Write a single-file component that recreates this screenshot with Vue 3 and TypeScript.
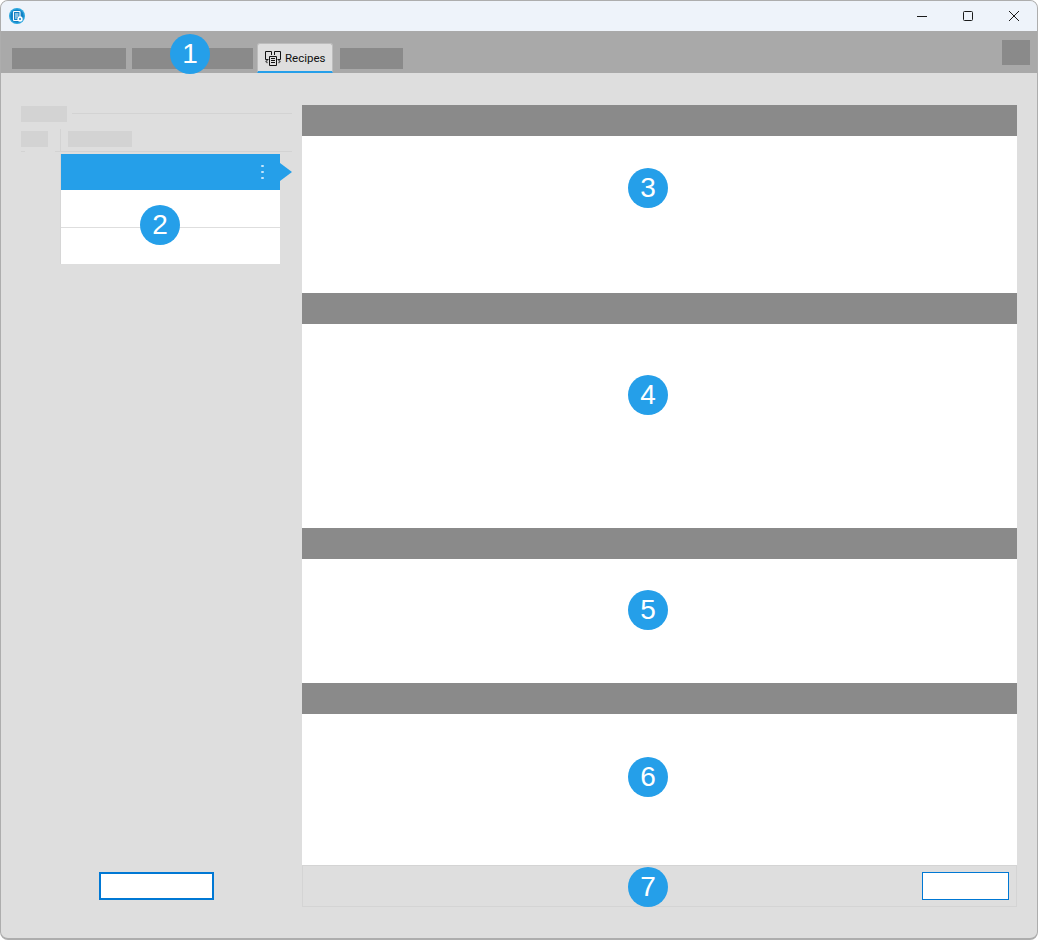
<template>
  <div class="window">
    <header class="titlebar">
      <svg class="app-icon" viewBox="0 0 16 16" width="16" height="16">
        <circle cx="8" cy="8" r="8" fill="#2aa6de" />
        <circle cx="8" cy="8" r="6.6" fill="#1280c4" />
        <rect x="4.5" y="3.5" width="6.5" height="9" rx="0.6" fill="none" stroke="#fff" stroke-width="1.1" />
        <path d="M6 6h3.5M6 8h3.5M6 10h1.8" stroke="#fff" stroke-width="1" />
        <circle cx="11" cy="11" r="2.7" fill="#fff" />
        <circle cx="11" cy="11" r="1" fill="#1280c4" />
      </svg>
      <div class="controls">
        <svg width="12" height="12" viewBox="0 0 12 12"><path d="M1 6.5h10" stroke="#1a1a1a" /></svg>
        <svg width="12" height="12" viewBox="0 0 12 12"><rect x="1.5" y="1.5" width="9" height="9" rx="1" fill="none" stroke="#1a1a1a" /></svg>
        <svg width="12" height="12" viewBox="0 0 12 12"><path d="M1 1l10 10M11 1L1 11" stroke="#1a1a1a" /></svg>
      </div>
    </header>

    <nav class="ribbon">
      <div class="ribbon-block" style="width: 114px"></div>
      <div class="ribbon-block" style="width: 121px"></div>
      <button class="tab" type="button">
        <svg class="tab-icon" viewBox="0 0 18 18" width="18" height="18" fill="none" stroke="#111" stroke-width="1">
          <path d="M4.5 10.5H1.5V2.5H7.5V6" />
          <path d="M13.5 10.5H16.5V2.5H10.5V6" />
          <path d="M5.5 7.5H12.5V16.5H5.5Z" />
          <path d="M7 9.5H11M7 11.5H11M7 13.5H11" />
          <path d="M3.5 11L2 12.5L3.5 14M14.5 11L16 12.5L14.5 14" stroke="#555" stroke-width="1.3" />
        </svg>
        <span>Recipes</span>
      </button>
      <div class="ribbon-block last" style="width: 63px"></div>
      <div class="ribbon-square"></div>
      <span class="badge badge-ribbon">1</span>
    </nav>

    <main class="content">
      <aside class="sidebar">
        <div class="group-head">
          <div class="ghost" style="width: 46px"></div>
          <div class="group-line"></div>
        </div>
        <div class="columns">
          <div class="ghost" style="width: 27px"></div>
          <div class="col-divider"></div>
          <div class="ghost" style="width: 64px"></div>
        </div>
        <div class="columns-line">
          <span class="stub"></span>
          <span class="rest"></span>
        </div>
        <ul class="list">
          <li class="row selected">
            <span class="kebab"><i></i><i></i><i></i></span>
          </li>
          <li class="row second"></li>
          <li class="row"></li>
          <span class="badge badge-list">2</span>
        </ul>
        <button class="outline-btn" type="button"></button>
      </aside>

      <section class="detail">
        <div v-for="s in sections" :key="s.badge" class="block">
          <div class="block-head"></div>
          <div class="block-body" :style="{ height: s.height + 'px' }">
            <span class="badge" :style="{ top: s.badgeTop + 'px' }">{{ s.badge }}</span>
          </div>
        </div>
        <footer class="detail-foot">
          <span class="badge badge-foot">7</span>
          <button class="save-btn" type="button"></button>
        </footer>
      </section>
    </main>
  </div>
</template>

<script setup lang="ts">
interface DetailSection {
  badge: number;
  height: number;
  badgeTop: number;
}

const sections: DetailSection[] = [
  { badge: 3, height: 157, badgeTop: 32 },
  { badge: 4, height: 204, badgeTop: 51 },
  { badge: 5, height: 124, badgeTop: 31 },
  { badge: 6, height: 151, badgeTop: 43 },
];
</script>

<style>
html,
body {
  margin: 0;
  background: #fff;
}
</style>

<style scoped>
.window {
  box-sizing: border-box;
  width: 1038px;
  height: 940px;
  display: flex;
  flex-direction: column;
  background: #dedede;
  border: 1px solid #adadad;
  border-bottom-width: 2px;
  border-radius: 8px;
  overflow: hidden;
  font-family: "Liberation Sans", Arial, sans-serif;
}

.titlebar {
  height: 30px;
  flex: none;
  display: flex;
  align-items: center;
  padding-left: 8px;
  background: #eef3fa;
}

.app-icon {
  display: block;
}

.controls {
  margin-left: auto;
  display: flex;
  gap: 34px;
  padding-right: 17px;
}

.controls svg {
  display: block;
}

.ribbon {
  position: relative;
  height: 42px;
  flex: none;
  box-sizing: border-box;
  display: flex;
  align-items: flex-end;
  padding-left: 11px;
  background: #a9a9a9;
}

.ribbon-block {
  height: 21px;
  margin-right: 6px;
  margin-bottom: 4px;
  background: #8a8a8a;
}

.ribbon-block:nth-child(2) {
  margin-right: 4px;
}

.ribbon-block.last {
  margin-left: 7px;
  margin-right: 0;
}

.ribbon-square {
  width: 28px;
  height: 25px;
  margin-left: auto;
  margin-right: 7px;
  align-self: flex-start;
  margin-top: 9px;
  background: #8a8a8a;
}

.tab {
  box-sizing: border-box;
  width: 76px;
  height: 30px;
  display: flex;
  align-items: center;
  gap: 3px;
  padding: 0 0 0 6px;
  background: #dedede;
  border: 1px solid #bdbdbd;
  border-bottom: 2px solid #259fe9;
  border-radius: 3px 3px 0 0;
  color: #111;
  font-family: Roboto, "Liberation Sans", sans-serif;
  font-size: 11.5px;
}

.tab-icon {
  display: block;
  flex: none;
}

.content {
  flex: 1;
  min-height: 0;
  display: flex;
}

.sidebar {
  box-sizing: border-box;
  width: 301px;
  flex: none;
  display: flex;
  flex-direction: column;
  padding: 33px 10px 38px 20px;
}

.ghost {
  height: 16px;
  flex: none;
  background: #d3d3d3;
}

.group-head {
  display: flex;
  gap: 5px;
}

.group-line {
  flex: 1;
  height: 1px;
  margin-top: 7px;
  background: #d3d3d3;
}

.columns {
  position: relative;
  display: flex;
  margin-top: 9px;
  height: 20px;
}

.col-divider {
  position: absolute;
  left: 39px;
  top: -2px;
  width: 1px;
  height: 22px;
  background: #d3d3d3;
}

.columns .ghost:last-child {
  margin-left: 20px;
}

.columns-line {
  display: flex;
  height: 1px;
  gap: 30px;
}

.stub {
  width: 4px;
  background: #d3d3d3;
}

.rest {
  flex: 1;
  background: #d3d3d3;
}

.list {
  position: relative;
  list-style: none;
  margin: 2px 0 0 40px;
  padding: 0;
  width: 219px;
  background: #fff;
  box-shadow: -1px 0 0 #d6d6d6;
}

.row {
  position: relative;
  height: 36px;
}

.row.second {
  height: 37px;
  border-bottom: 1px solid #dedede;
}

.row.selected {
  background: #259fe9;
}

.row.selected::after {
  content: "";
  position: absolute;
  left: 100%;
  top: 9px;
  border-left: 12px solid #259fe9;
  border-top: 9px solid transparent;
  border-bottom: 9px solid transparent;
}

.kebab {
  position: absolute;
  left: 200px;
  top: 10.5px;
  display: flex;
  flex-direction: column;
  gap: 3.5px;
}

.kebab i {
  display: block;
  width: 2.5px;
  height: 2.5px;
  border-radius: 50%;
  background: #c4e5fb;
}

.outline-btn {
  box-sizing: border-box;
  width: 115px;
  height: 28px;
  margin: auto 0 0 78px;
  padding: 0;
  background: #fff;
  border: 2px solid #0078d4;
}

.detail {
  width: 715px;
  flex: none;
  margin-top: 32px;
  display: flex;
  flex-direction: column;
}

.block-head {
  height: 31px;
  background: #8a8a8a;
}

.block-body {
  position: relative;
  background: #fff;
}

.detail-foot {
  position: relative;
  box-sizing: border-box;
  height: 42px;
  display: flex;
  align-items: center;
  justify-content: flex-end;
  padding-right: 7px;
  border: 1px solid #d4d4d4;
}

.save-btn {
  box-sizing: border-box;
  width: 87px;
  height: 28px;
  padding: 0;
  background: #fff;
  border: 1px solid #0078d4;
}

.badge {
  position: absolute;
  left: 326px;
  width: 40px;
  height: 40px;
  display: flex;
  align-items: center;
  justify-content: center;
  border-radius: 50%;
  background: #259fe9;
  color: #fff;
  font-family: "Liberation Sans", Arial, sans-serif;
  font-size: 28px;
  line-height: 1;
}

.badge-ribbon {
  left: 169px;
  top: 3px;
}

.badge-list {
  left: 79px;
  top: 51px;
}

.badge-foot {
  left: 325px;
  top: 1px;
}
</style>
